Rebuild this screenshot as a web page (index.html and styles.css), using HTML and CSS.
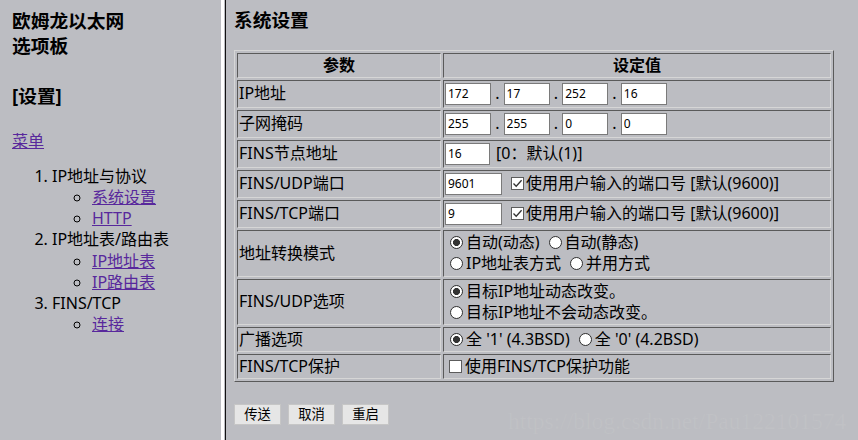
FILE: index.html
```html
<!DOCTYPE html>
<html lang="zh-CN">
<head>
<meta charset="utf-8">
<title>系统设置</title>
<link rel="stylesheet" href="styles.css">
</head>
<body>
<div class="page">
  <div class="left">
    <h3 class="brand">欧姆龙以太网<br>选项板</h3>
    <h3 class="sect">[设置]</h3>
    <p class="menu"><a href="#">菜单</a></p>
    <ol class="nav">
      <li>IP地址与协议
        <ul>
          <li><a href="#">系统设置</a></li>
          <li><a href="#">HTTP</a></li>
        </ul>
      </li>
      <li>IP地址表/路由表
        <ul>
          <li><a href="#">IP地址表</a></li>
          <li><a href="#">IP路由表</a></li>
        </ul>
      </li>
      <li>FINS/TCP
        <ul>
          <li><a href="#">连接</a></li>
        </ul>
      </li>
    </ol>
  </div>
  <div class="split"></div>
  <div class="right">
    <h3 class="title">系统设置</h3>
    <table class="grid">
      <tr><th class="c1">参数</th><th class="c2">设定值</th></tr>
      <tr>
        <td class="c1">IP地址</td>
        <td class="c2"><div class="fl">
          <input class="ip" type="text" value="172"><span class="dot">.</span><input class="ip" type="text" value="17"><span class="dot">.</span><input class="ip" type="text" value="252"><span class="dot">.</span><input class="ip" type="text" value="16">
        </div></td>
      </tr>
      <tr>
        <td class="c1">子网掩码</td>
        <td class="c2"><div class="fl">
          <input class="ip" type="text" value="255"><span class="dot">.</span><input class="ip" type="text" value="255"><span class="dot">.</span><input class="ip" type="text" value="0"><span class="dot">.</span><input class="ip" type="text" value="0">
        </div></td>
      </tr>
      <tr>
        <td class="c1">FINS节点地址</td>
        <td class="c2"><div class="fl">
          <input class="node" type="text" value="16"><span class="hint">[0：默认(1)]</span>
        </div></td>
      </tr>
      <tr>
        <td class="c1">FINS/UDP端口</td>
        <td class="c2"><div class="fl">
          <input class="port" type="text" value="9601"><span class="cb"><svg viewBox="0 0 13 13" width="13" height="13"><polyline points="2.5,6.5 5.2,9.3 10.6,3.2" fill="none" stroke="#333" stroke-width="1.3"/></svg></span><span>使用用户输入的端口号 [默认(9600)]</span>
        </div></td>
      </tr>
      <tr>
        <td class="c1">FINS/TCP端口</td>
        <td class="c2"><div class="fl">
          <input class="port" type="text" value="9"><span class="cb"><svg viewBox="0 0 13 13" width="13" height="13"><polyline points="2.5,6.5 5.2,9.3 10.6,3.2" fill="none" stroke="#333" stroke-width="1.3"/></svg></span><span>使用用户输入的端口号 [默认(9600)]</span>
        </div></td>
      </tr>
      <tr>
        <td class="c1">地址转换模式</td>
        <td class="c2">
          <div class="rl tall"><span class="rd on"></span><span>自动(动态)</span><span class="rd next"></span><span>自动(静态)</span></div>
          <div class="rl tall"><span class="rd"></span><span>IP地址表方式</span><span class="rd next"></span><span>并用方式</span></div>
        </td>
      </tr>
      <tr>
        <td class="c1">FINS/UDP选项</td>
        <td class="c2">
          <div class="rl"><span class="rd on"></span><span>目标IP地址动态改变。</span></div>
          <div class="rl"><span class="rd"></span><span>目标IP地址不会动态改变。</span></div>
        </td>
      </tr>
      <tr>
        <td class="c1">广播选项</td>
        <td class="c2">
          <div class="rl"><span class="rd on"></span><span>全 '1' (4.3BSD)</span><span class="rd next"></span><span>全 '0' (4.2BSD)</span></div>
        </td>
      </tr>
      <tr>
        <td class="c1">FINS/TCP保护</td>
        <td class="c2">
          <div class="rl"><span class="cb first"></span><span>使用FINS/TCP保护功能</span></div>
        </td>
      </tr>
    </table>
    <div class="actions">
      <button type="button">传送</button>
      <button type="button">取消</button>
      <button type="button">重启</button>
    </div>
    <div class="wm">https://blog.csdn.net/Pau122101574</div>
  </div>
</div>
</body>
</html>
```

FILE: styles.css
```css
html, body {
  margin: 0;
  padding: 0;
}

body {
  background: #bcbdc2;
  color: #000;
  font-family: "Noto Sans", "Noto Sans CJK SC", sans-serif;
  font-size: 16px;
  line-height: 1.32;
}

.page {
  display: flex;
  height: 440px;
  overflow: hidden;
}

/* ---------- left menu frame ---------- */
.left {
  width: 221px;
  flex: none;
  box-sizing: border-box;
  padding: 9px 0 0 12px;
}

.left h3 {
  margin: 0;
  font-size: 18.72px;
  font-weight: bold;
  line-height: 24.7px;
}

.left .sect {
  margin-top: 26px;
}

.menu {
  margin: 22px 0 0;
  line-height: 21.1px;
}

a {
  color: #58289c;
  text-decoration: underline;
}

.nav {
  margin: 14px 0 0;
  padding-left: 40px;
  list-style-type: decimal;
  line-height: 21.1px;
}

.nav ul {
  margin: 0;
  padding-left: 40px;
  list-style-type: circle;
}

/* ---------- frame divider ---------- */
.split {
  width: 3px;
  flex: none;
  background: #ffffff;
  margin-right: 1px;
}

/* ---------- right content frame ---------- */
.right {
  position: relative;
  flex: 1;
  border-left: 1px solid #111;
  padding: 7.5px 0 0 8px;
}

.title {
  margin: 0;
  font-size: 18.72px;
  font-weight: bold;
  line-height: 24.7px;
}

.grid {
  margin-top: 17.5px;
  width: 600px;
  border-collapse: separate;
  border-spacing: 2px;
  border: 1px solid;
  border-color: #d6d6d6 #5a5a5a #5a5a5a #d6d6d6;
}

.grid th,
.grid td {
  border: 1px solid;
  border-color: #5a5a5a #d6d6d6 #d6d6d6 #5a5a5a;
  padding: 1px;
  line-height: 21px;
  vertical-align: middle;
}

.grid th {
  font-weight: bold;
  text-align: center;
}

.grid td {
  text-align: left;
}

.c1 {
  width: 200px;
}

.fl {
  display: flex;
  align-items: center;
  height: 24px;
  white-space: nowrap;
}

.fl input {
  box-sizing: border-box;
  height: 22px;
  margin: 0;
  padding: 1px 2px;
  border: 1px solid #7a7a7a;
  background: #fff;
  color: #000;
  font-family: "Noto Sans", "Noto Sans CJK SC", sans-serif;
  font-size: 12px;
  outline: none;
}

.ip {
  width: 46px;
}

.node {
  width: 45px;
}

.port {
  width: 57px;
}

.dot {
  width: 12.6px;
  text-align: center;
}

.hint {
  margin-left: 6px;
}

.cb {
  display: inline-block;
  box-sizing: border-box;
  width: 13px;
  height: 13px;
  flex: none;
  border: 1px solid #5c5c5c;
  background: #fff;
  margin: 0 2px 0 9px;
  position: relative;
}

.cb svg {
  position: absolute;
  left: -1px;
  top: -1px;
}

.cb.first {
  margin: 0 3px 0 4px;
}

.rl {
  display: flex;
  align-items: center;
  height: 21px;
  white-space: nowrap;
}

.rl.tall {
  height: 21.5px;
}

.rd {
  display: inline-block;
  box-sizing: border-box;
  width: 13px;
  height: 13px;
  flex: none;
  border-radius: 50%;
  border: 1px solid #2e2e2e;
  background: #fff;
  margin: 0 3px 0 5px;
}

.rd.on {
  background: radial-gradient(circle, #333 0, #333 3.2px, #fff 3.8px);
}

.rd.next {
  margin-left: 9px;
}

.actions {
  display: flex;
  gap: 7px;
  margin-top: 22px;
}

.actions button {
  box-sizing: border-box;
  width: 47px;
  height: 21px;
  padding: 0;
  background: #e6e6e6;
  border: 1px solid #c6c6c6;
  border-radius: 0;
  color: #000;
  font-family: "Noto Sans", "Noto Sans CJK SC", sans-serif;
  font-size: 13.33px;
  line-height: 19px;
}

.wm {
  position: absolute;
  left: 282px;
  top: 406px;
  font-family: "Liberation Serif", serif;
  font-size: 23.5px;
  color: rgba(255, 255, 255, 0.06);
  white-space: nowrap;
  pointer-events: none;
}
```
